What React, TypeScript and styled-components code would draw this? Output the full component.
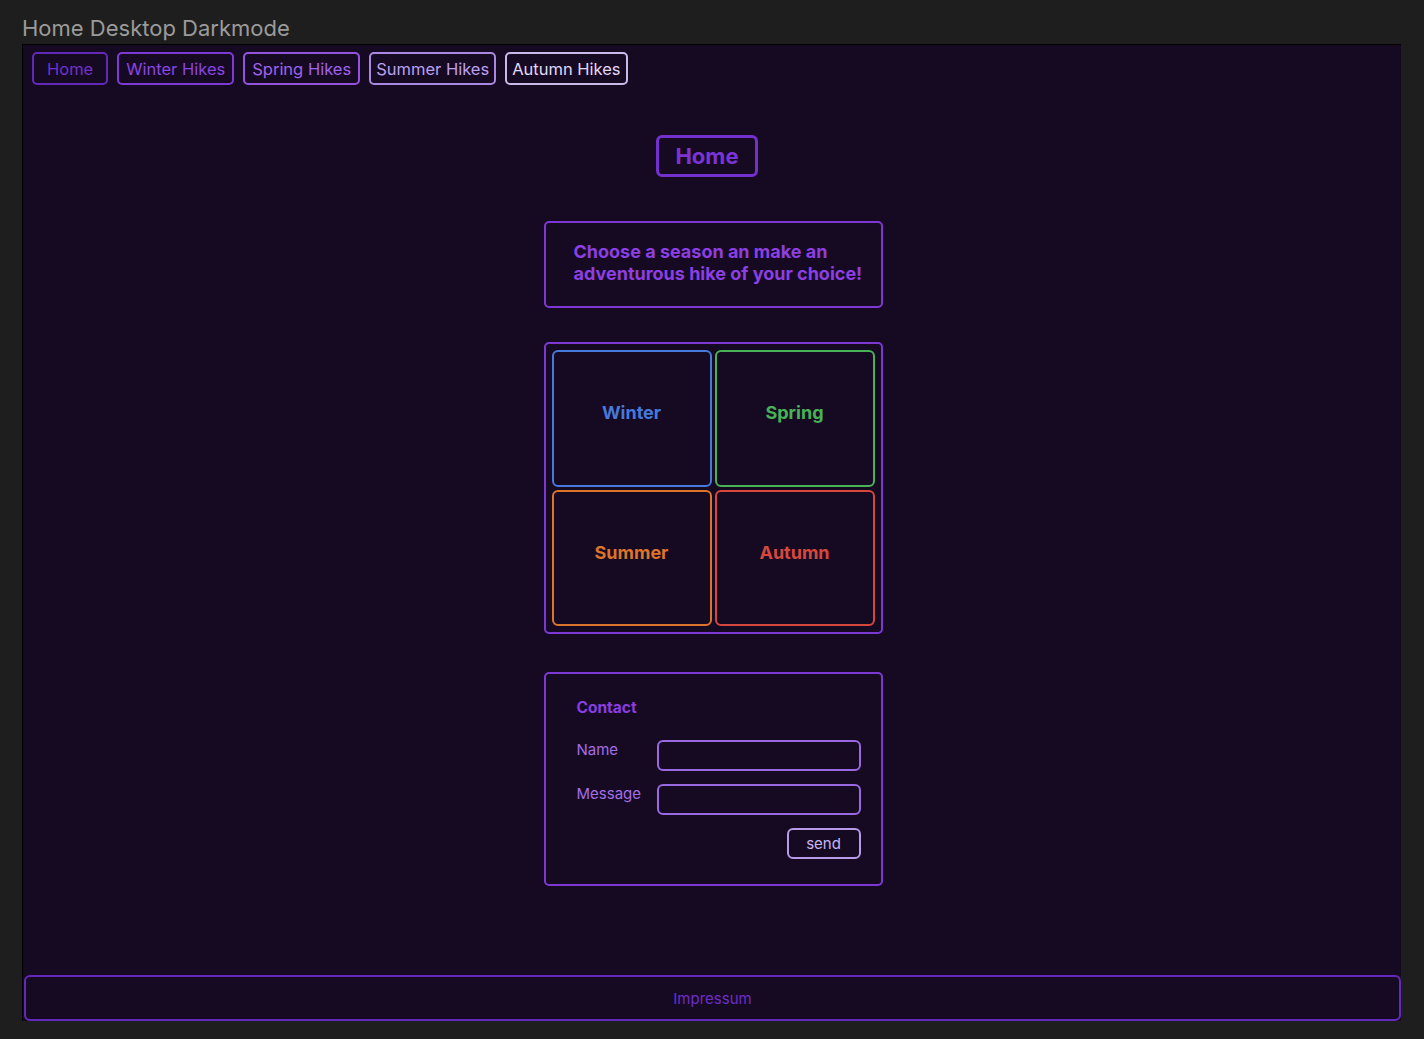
import React from "react";
import styled, { createGlobalStyle } from "styled-components";

const Global = createGlobalStyle`
  html, body { margin: 0; padding: 0; background: #1e1e1e; }
  body { font-family: Inter, "Noto Sans", sans-serif; }
  * { box-sizing: border-box; }
`;

const Page = styled.div`
  width: 1424px;
  height: 1039px;
  padding: 14px 0 0 22px;
  display: flex;
  flex-direction: column;
`;

const Title = styled.div`
  font-size: 22px;
  line-height: 28px;
  color: #9b9b9b;
  height: 30px;
`;

const Frame = styled.div`
  width: 1379px;
  height: 977px;
  background: #160a23;
  border-left: 1px solid #000;
  border-top: 1px solid #000;
  display: flex;
  flex-direction: column;
`;

const Nav = styled.nav`
  display: flex;
  gap: 9px;
  padding: 7px 0 0 9px;
`;

const NavButton = styled.button<{ $border: string; $color: string; $padX: number }>`
  height: 33px;
  padding: 0 ${(p) => p.$padX}px;
  background: transparent;
  border: 2px solid ${(p) => p.$border};
  border-radius: 5px;
  color: ${(p) => p.$color};
  font-family: Inter, sans-serif;
  font-size: 16.5px;
  line-height: 20px;
  cursor: pointer;
`;

const Main = styled.main`
  flex: 1;
  display: flex;
  flex-direction: column;
  align-items: center;
  padding: 50px 0 0 2px;
`;

const Heading = styled.h1`
  margin: 0 12px 44px 0;
  height: 42px;
  padding: 0 16px;
  border: 3px solid #7330cc;
  border-radius: 6px;
  color: #7a34d4;
  font-size: 22px;
  font-weight: 700;
  line-height: 36px;
`;

const Card = styled.section`
  width: 339px;
  border: 2px solid #7d38d4;
  border-radius: 5px;
`;

const Intro = styled(Card)`
  height: 87px;
  margin-bottom: 34px;
  padding: 18px 0 0 28px;
  color: #8c3fe2;
  font-size: 18px;
  font-weight: 700;
  line-height: 22px;
`;

const SeasonGrid = styled(Card)`
  height: 292px;
  margin-bottom: 38px;
  padding: 6px;
  display: grid;
  grid-template-columns: 1fr 1fr;
  grid-template-rows: 1fr 1fr;
  gap: 3px;
`;

const Season = styled.div<{ $color: string }>`
  border: 2px solid ${(p) => p.$color};
  border-radius: 6px;
  color: ${(p) => p.$color};
  font-size: 18px;
  font-weight: 700;
  display: flex;
  align-items: center;
  justify-content: center;
  padding-bottom: 11px;
`;

const Contact = styled(Card)`
  height: 214px;
  padding: 24px 20px 0 31px;
  display: flex;
  flex-direction: column;
`;

const ContactTitle = styled.div`
  color: #8a3de0;
  font-size: 15.5px;
  font-weight: 700;
  line-height: 20px;
  margin-bottom: 22px;
`;

const Row = styled.label`
  display: flex;
  align-items: flex-start;
  margin-bottom: 13px;
`;

const Label = styled.span`
  width: 80px;
  padding-top: 1px;
  color: #a36ee6;
  font-size: 15px;
  line-height: 18px;
`;

const Input = styled.input`
  width: 204px;
  height: 31px;
  background: transparent;
  border: 2px solid #9a68e0;
  border-radius: 6px;
  outline: none;
  color: #d8c8f8;
`;

const Send = styled.button`
  align-self: flex-end;
  width: 74px;
  height: 31px;
  background: transparent;
  border: 2px solid #b79ae8;
  border-radius: 6px;
  color: #c8b6f2;
  font-family: Inter, sans-serif;
  font-size: 15px;
  cursor: pointer;
`;

const Footer = styled.footer`
  height: 46px;
  margin-left: 1px;
  border: 2px solid #6428bc;
  border-radius: 6px;
  display: flex;
  align-items: center;
  justify-content: center;
  color: #6d2dc8;
  font-size: 15px;
`;

const navItems = [
  { label: "Home", border: "#6228b8", color: "#7231cc", padX: 13 },
  { label: "Winter Hikes", border: "#7e3ad4", color: "#8a45e0", padX: 7 },
  { label: "Spring Hikes", border: "#9254dc", color: "#a062ea", padX: 7 },
  { label: "Summer Hikes", border: "#a888e0", color: "#bca0f0", padX: 5 },
  { label: "Autumn Hikes", border: "#c8bae8", color: "#e2d8f8", padX: 5 },
];

const seasons = [
  { label: "Winter", color: "#4679dc" },
  { label: "Spring", color: "#48b256" },
  { label: "Summer", color: "#dc742a" },
  { label: "Autumn", color: "#d8473e" },
];

export default function App() {
  return (
    <>
      <Global />
      <Page>
        <Title>Home Desktop Darkmode</Title>
        <Frame>
          <Nav>
            {navItems.map((n) => (
              <NavButton key={n.label} $border={n.border} $color={n.color} $padX={n.padX}>
                {n.label}
              </NavButton>
            ))}
          </Nav>
          <Main>
            <Heading>Home</Heading>
            <Intro>
              Choose a season an make an
              <br />
              adventurous hike of your choice!
            </Intro>
            <SeasonGrid>
              {seasons.map((s) => (
                <Season key={s.label} $color={s.color}>
                  {s.label}
                </Season>
              ))}
            </SeasonGrid>
            <Contact>
              <ContactTitle>Contact</ContactTitle>
              <Row>
                <Label>Name</Label>
                <Input />
              </Row>
              <Row>
                <Label>Message</Label>
                <Input />
              </Row>
              <Send>send</Send>
            </Contact>
          </Main>
          <Footer>Impressum</Footer>
        </Frame>
      </Page>
    </>
  );
}
